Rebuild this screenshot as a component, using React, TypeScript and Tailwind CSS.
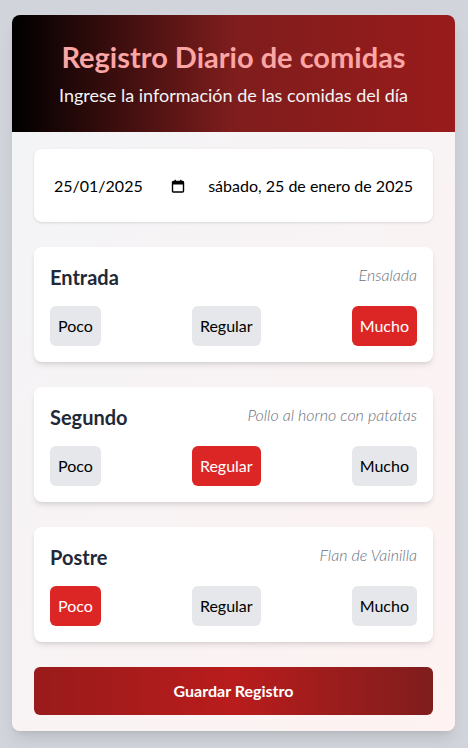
import { useState } from "react";

type Level = "Poco" | "Regular" | "Mucho";

interface Meal {
  name: string;
  dish: string;
  level: Level;
}

const levels: Level[] = ["Poco", "Regular", "Mucho"];

function CalendarIcon() {
  return (
    <svg width="14" height="14" viewBox="0 0 14 14" className="text-black">
      <rect x="1.5" y="2.5" width="11" height="10.5" rx="1" fill="none" stroke="currentColor" strokeWidth="1.4" />
      <rect x="1.5" y="2.5" width="11" height="3" fill="currentColor" />
      <rect x="3.5" y="0.8" width="1.4" height="2.5" fill="currentColor" />
      <rect x="9.1" y="0.8" width="1.4" height="2.5" fill="currentColor" />
    </svg>
  );
}

function MealCard({ meal, onPick }: { meal: Meal; onPick: (l: Level) => void }) {
  return (
    <div className="bg-white rounded-lg shadow-md p-4">
      <div className="flex items-center justify-between mb-[15px]">
        <h2 className="text-xl font-bold text-[#1f2937] leading-7">{meal.name}</h2>
        <span className="italic text-[#6b7280] text-base font-light -mt-1">{meal.dish}</span>
      </div>
      <div className="flex justify-between">
        {levels.map((l) => (
          <button
            key={l}
            onClick={() => onPick(l)}
            className={`px-2 h-10 rounded-md text-base ${
              meal.level === l ? "bg-[#dc2626] text-white" : "bg-[#e5e7eb] text-black"
            }`}
          >
            {l}
          </button>
        ))}
      </div>
    </div>
  );
}

export default function App() {
  const [meals, setMeals] = useState<Meal[]>([
    { name: "Entrada", dish: "Ensalada", level: "Mucho" },
    { name: "Segundo", dish: "Pollo al horno con patatas", level: "Regular" },
    { name: "Postre", dish: "Flan de Vainilla", level: "Poco" },
  ]);

  const pick = (i: number, l: Level) =>
    setMeals((m) => m.map((x, j) => (j === i ? { ...x, level: l } : x)));

  return (
    <div className="min-h-screen bg-[#d1d5db] pl-3 pr-[13px] pt-[15px] pb-4 font-['Lato',sans-serif]">
      <div className="rounded-lg overflow-hidden shadow-lg">
        {/* Header */}
        <div className="bg-linear-to-r/srgb from-black via-[#7f1d1d] to-[#991b1b] h-[117px] flex flex-col items-center justify-center">
          <h1 className="text-[29px] font-bold text-[#fca5a5] leading-9">Registro Diario de comidas</h1>
          <p className="text-lg text-[#f3f4f6] mt-1.5">Ingrese la información de las comidas del día</p>
        </div>

        {/* Body */}
        <div className="bg-linear-to-br from-[#f3f4f6] to-[#fef2f2] px-[22px] pt-[17px] pb-4 flex flex-col gap-[25px]">
          <div className="bg-white rounded-lg shadow-sm h-[73px] flex items-center px-5">
            <div className="flex items-center gap-7 text-black text-base">
              <span>25/01/2025</span>
              <CalendarIcon />
            </div>
            <span className="ml-auto text-black text-base">sábado, 25 de enero de 2025</span>
          </div>

          {meals.map((m, i) => (
            <MealCard key={m.name} meal={m} onPick={(l) => pick(i, l)} />
          ))}

          <button className="h-12 rounded-md bg-linear-to-r/srgb from-[#991b1b] via-[#b91c1c] to-[#7f1d1d] text-white font-bold text-base">
            Guardar Registro
          </button>
        </div>
      </div>
    </div>
  );
}
